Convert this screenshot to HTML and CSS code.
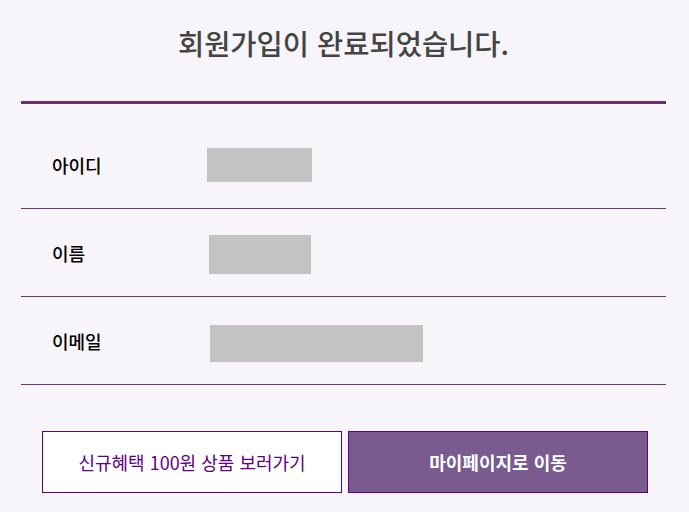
FILE: index.html
```html
<!DOCTYPE html>
<html lang="ko">
<head>
<meta charset="utf-8">
<link rel="stylesheet" href="styles.css">
</head>
<body>
<div class="page">
  <h1 class="title">회원가입이 완료되었습니다.</h1>
  <div class="info">
    <div class="row">
      <div class="label">아이디</div>
      <div class="value v-id"></div>
    </div>
    <div class="row">
      <div class="label">이름</div>
      <div class="value v-name"></div>
    </div>
    <div class="row">
      <div class="label">이메일</div>
      <div class="value v-mail"></div>
    </div>
  </div>
  <div class="actions">
    <button class="btn btn-line">신규혜택 100원 상품 보러가기</button>
    <button class="btn btn-fill">마이페이지로 이동</button>
  </div>
</div>
</body>
</html>
```
FILE: styles.css
```css
html, body {
  margin: 0;
  padding: 0;
  background: #f7f5f9;
}
body {
  font-family: "Noto Sans CJK KR", "Noto Sans", sans-serif;
  color: #333;
}
.page {
  width: 645px;
  margin-left: 21px;
}
.title {
  margin: 0;
  padding: 22px 0 0;
  box-sizing: border-box;
  height: 104px;
  text-align: center;
  font-size: 28.5px;
  font-weight: 500;
  line-height: 42px;
  color: #444;
  border-bottom: 3px solid #66326e;
}
.info {
  margin-top: 17px;
}
.row {
  display: flex;
  align-items: center;
  height: 87px;
  border-bottom: 1px solid #6b3a72;
}
.label {
  width: 155px;
  padding-left: 31px;
  font-size: 18px;
  font-weight: 500;
  color: #000;
  line-height: 24px;
}
.value {
  background: #c3c3c3;
}
.v-id {
  width: 105px;
  height: 34px;
  margin-top: 0;
}
.v-name {
  width: 102px;
  height: 39px;
  margin-left: 2px;
  margin-top: 4px;
}
.v-mail {
  width: 213px;
  height: 37px;
  margin-left: 3px;
  margin-top: 5px;
}
.actions {
  display: flex;
  justify-content: center;
  gap: 6px;
  margin-top: 46px;
  padding-left: 3px;
}
.btn {
  width: 300px;
  height: 62px;
  box-sizing: border-box;
  border: 1px solid #5f0080;
  font-family: "Noto Sans CJK KR", "Noto Sans", sans-serif;
  font-size: 18px;
  padding: 0;
  margin: 0;
}
.btn-line {
  background: #fff;
  color: #5f0080;
  font-weight: 400;
}
.btn-fill {
  background: #795b8f;
  color: #fff;
  font-weight: 700;
}
```
